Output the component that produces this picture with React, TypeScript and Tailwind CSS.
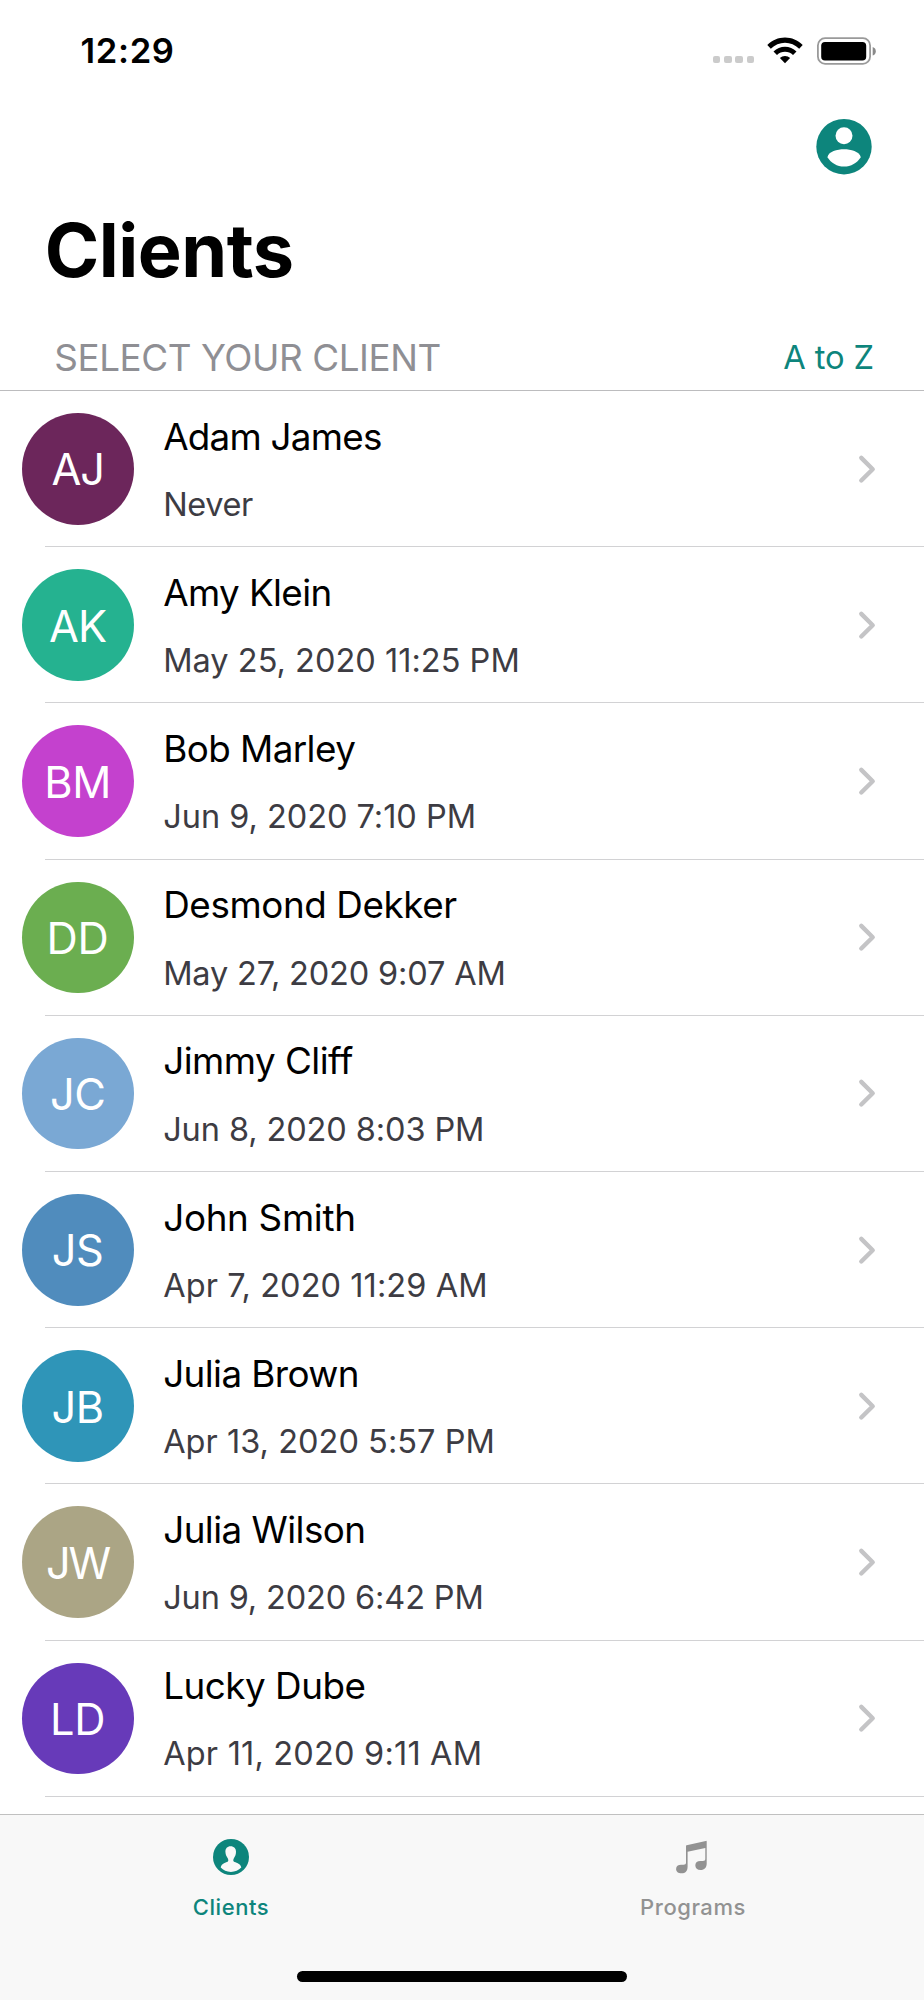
type Client = {
  name: string;
  seen: string;
  initials: string;
  color: string;
  nameTracking: string;
  seenTracking: string;
  initialsTracking: string;
};

const clients: Client[] = [
  { name: "Adam James", seen: "Never", initials: "AJ", color: "bg-[#6c265b]", nameTracking: "tracking-[-0.75px]", seenTracking: "tracking-[-0.4px]", initialsTracking: "tracking-[-1.3px]" },
  { name: "Amy Klein", seen: "May 25, 2020 11:25 PM", initials: "AK", color: "bg-[#25b290]", nameTracking: "tracking-[-0.6px]", seenTracking: "tracking-[0.02px]", initialsTracking: "tracking-[-1px]" },
  { name: "Bob Marley", seen: "Jun 9, 2020 7:10 PM", initials: "BM", color: "bg-[#c441ce]", nameTracking: "tracking-[-0.56px]", seenTracking: "tracking-[-0.03px]", initialsTracking: "tracking-[-0.3px]" },
  { name: "Desmond Dekker", seen: "May 27, 2020 9:07 AM", initials: "DD", color: "bg-[#6bae50]", nameTracking: "tracking-[-0.4px]", seenTracking: "tracking-[-0.16px]", initialsTracking: "tracking-[-0.2px]" },
  { name: "Jimmy Cliff", seen: "Jun 8, 2020 8:03 PM", initials: "JC", color: "bg-[#7aa8d4]", nameTracking: "tracking-[-0.52px]", seenTracking: "tracking-[-0.1px]", initialsTracking: "tracking-[-0.5px]" },
  { name: "John Smith", seen: "Apr 7, 2020 11:29 AM", initials: "JS", color: "bg-[#508cbd]", nameTracking: "tracking-[-0.3px]", seenTracking: "tracking-[0.07px]", initialsTracking: "tracking-[-0.5px]" },
  { name: "Julia Brown", seen: "Apr 13, 2020 5:57 PM", initials: "JB", color: "bg-[#2f95b8]", nameTracking: "tracking-[-0.58px]", seenTracking: "tracking-[0.03px]", initialsTracking: "tracking-[-0.5px]" },
  { name: "Julia Wilson", seen: "Jun 9, 2020 6:42 PM", initials: "JW", color: "bg-[#aba585]", nameTracking: "tracking-[-0.55px]", seenTracking: "tracking-[-0.15px]", initialsTracking: "tracking-[-2px]" },
  { name: "Lucky Dube", seen: "Apr 11, 2020 9:11 AM", initials: "LD", color: "bg-[#673ab9]", nameTracking: "tracking-[-0.48px]", seenTracking: "tracking-[0.19px]", initialsTracking: "tracking-[-0.2px]" },
];

function SignalDots() {
  return (
    <div className="mt-[17.5px] flex gap-[3.7px]">
      {[0, 1, 2, 3].map((i) => (
        <span key={i} className="size-[7.5px] rounded-[2px] bg-[#cbcbcb]" />
      ))}
    </div>
  );
}

function WifiIcon() {
  return (
    <svg className="ml-[13px] h-[27px] w-9" viewBox="0 0 36 27">
      <path d="M0.3 8.1C5.2 3.3 11.3 0.6 18 0.6s12.800 2.700 17.700 7.500L32.200 11.700C28.200 7.900 23.300 5.700 18 5.700S7.800 7.900 3.800 11.700Z" />
      <path d="M6.500 14.400C9.700 11.400 13.700 9.700 18 9.700s8.300 1.700 11.500 4.700l-3.500 3.600C23.800 15.900 21 14.800 18 14.800s-5.800 1.100-8 3.200Z" />
      <path d="M12.900 21.100C14.300 19.700 16.100 18.900 18 18.900s3.700.8 5.100 2.200L18 26.300Z" />
    </svg>
  );
}

function BatteryIcon() {
  return (
    <svg className="ml-[14px] h-7 w-[60px]" viewBox="0 0 60 28">
      <rect x="0.900" y="1.200" width="52.200" height="25.600" rx="7.200" fill="none" stroke="#9a9a9a" strokeWidth="1.800" />
      <rect x="4.200" y="5" width="45" height="18.600" rx="3.800" />
      <path d="M55.700 10c2 .7 3.100 2.200 3.100 4.300s-1.100 3.600-3.100 4.300Z" fill="#8a8a8a" />
    </svg>
  );
}

function ProfileIcon() {
  return (
    <svg className="size-14" viewBox="0 0 56 56">
      <circle cx="28" cy="27.700" r="27.700" fill="#0d857c" />
      <circle cx="28" cy="16.800" r="8.500" fill="#fff" />
      <path d="M11.400 38.300C12.400 32.600 21.300 30.300 28 30.300S43.600 32.600 44.800 38.300C41 44.100 35 47.600 28 47.600S15.200 44.100 11.400 38.300Z" fill="#fff" />
    </svg>
  );
}

function ContactIcon() {
  return (
    <svg className="size-9" viewBox="0 0 36 36">
      <circle cx="18" cy="18" r="18" fill="#0d857c" />
      <path d="M17.600 7.200C21 7.200 23.100 9.500 23 12.800C23 15.500 22.300 17.300 21 18.900C20.100 20.400 20 22 21 22.700C22.100 23.400 27.500 23.900 28.300 28.600C25.700 31.300 22 33 17.900 33S10.200 31.300 7.700 28.600C8.500 23.900 13.500 23.400 14.600 22.700C15.600 22 15.500 20.400 14.600 18.900C13.300 17.300 12.500 15.500 12.400 12.800C12.300 9.500 14.200 7.200 17.600 7.200Z" fill="#f8f8f8" />
    </svg>
  );
}

function MusicIcon() {
  return (
    <svg className="size-9" viewBox="0 0 36 36" fill="#929292">
      <path d="M11 6.900Q11 6.300 11.600 6.150L30.800 1.900Q31.700 1.700 31.700 2.500V24.500C31.700 28.800 29.300 31 25.700 31C22.300 31 20.300 29.200 20.300 26.300C20.300 23.500 22.300 22 25.300 22H27.800C29.600 22 30.300 21.300 30.300 19.800V9L12.600 12.800V27.700C12.600 32.200 10.200 34.300 6.600 34.300C3.200 34.300 1.100 32.600 1.100 29.900C1.100 27.300 3.100 25.800 6.100 25.800H8.500C10.300 25.800 11 25.100 11 23.600Z" />
    </svg>
  );
}

function Chevron() {
  return (
    <svg className="h-[30px] w-5" viewBox="0 0 20 30" fill="none">
      <path d="M4.300 3.900L15.700 15.200L4.300 26.500" stroke="#c4c4c6" strokeWidth="4.400" strokeLinecap="round" strokeLinejoin="round" />
    </svg>
  );
}

function ClientRow({ client }: { client: Client }) {
  return (
    <li className="flex h-[156.2px] shrink-0 flex-col">
      <div className="flex flex-1 items-center pl-[22.400px] pr-[47px]">
        <div className={`mt-[0.6px] flex size-[111.600px] shrink-0 items-center justify-center rounded-full text-[43.300px] leading-[44px] text-white ${client.color}`}>
          <span className={`pr-[1.200px] pt-px ${client.initialsTracking}`}>{client.initials}</span>
        </div>
        <div className="ml-[29.200px] flex flex-1 flex-col pt-[4.800px]">
          <span className={`text-[36.800px] leading-[68.400px] text-black ${client.nameTracking}`}>{client.name}</span>
          <span className={`text-[32.500px] leading-[68.400px] text-[#3d3c43] ${client.seenTracking}`}>{client.seen}</span>
        </div>
        <Chevron />
      </div>
      <div className="ml-[45px] h-px shrink-0 bg-[#d2d2d4]" />
    </li>
  );
}

export default function App() {
  return (
    <div className="flex h-[2000px] w-[924px] flex-col overflow-hidden bg-white font-['Inter',sans-serif] text-black">
      <div className="flex h-[102px] shrink-0 items-center justify-between pl-[80.500px] pr-[47px]">
        <span className="pb-[2px] text-[34.600px] font-semibold leading-[40px] tracking-[0.65px]">12:29</span>
        <div className="flex items-center pb-px">
          <SignalDots />
          <WifiIcon />
          <BatteryIcon />
        </div>
      </div>

      <div className="flex h-[89px] shrink-0 items-center justify-end pr-[52px]">
        <ProfileIcon />
      </div>

      <h1 className="h-[118px] shrink-0 pl-[44.700px] text-[73.800px] font-bold leading-[120px] tracking-[-0.5px]">Clients</h1>

      <div className="flex h-[82px] shrink-0 items-end justify-between border-b border-[#bcbcbe] pb-3 pl-[54.300px] pr-[50px]">
        <span className="text-[36.800px] leading-[40px] tracking-[-0.42px] text-[#8f8f94]">SELECT YOUR CLIENT</span>
        <span className="text-[32.700px] leading-[41px] tracking-[-0.1px] text-[#0d857c]">A to Z</span>
      </div>

      <ul className="flex min-h-0 flex-1 flex-col overflow-hidden">
        {clients.map((c) => (
          <ClientRow key={c.name} client={c} />
        ))}
      </ul>

      <div className="flex h-[186px] shrink-0 flex-col items-center border-t border-[#c0c0c0] bg-[#f8f8f8]">
        <div className="grid w-full grid-cols-2 pt-6">
          <div className="flex flex-col items-center text-[#0d857c]">
            <ContactIcon />
            <span className="mt-[17px] text-[22px] font-medium leading-[30px] tracking-[0.55px]">Clients</span>
          </div>
          <div className="flex flex-col items-center text-[#929292]">
            <MusicIcon />
            <span className="mt-[17px] text-[22px] font-medium leading-[30px] tracking-[0.55px]">Programs</span>
          </div>
        </div>
        <div className="mt-[49px] h-[11px] w-[330px] rounded-full bg-black" />
      </div>
    </div>
  );
}
